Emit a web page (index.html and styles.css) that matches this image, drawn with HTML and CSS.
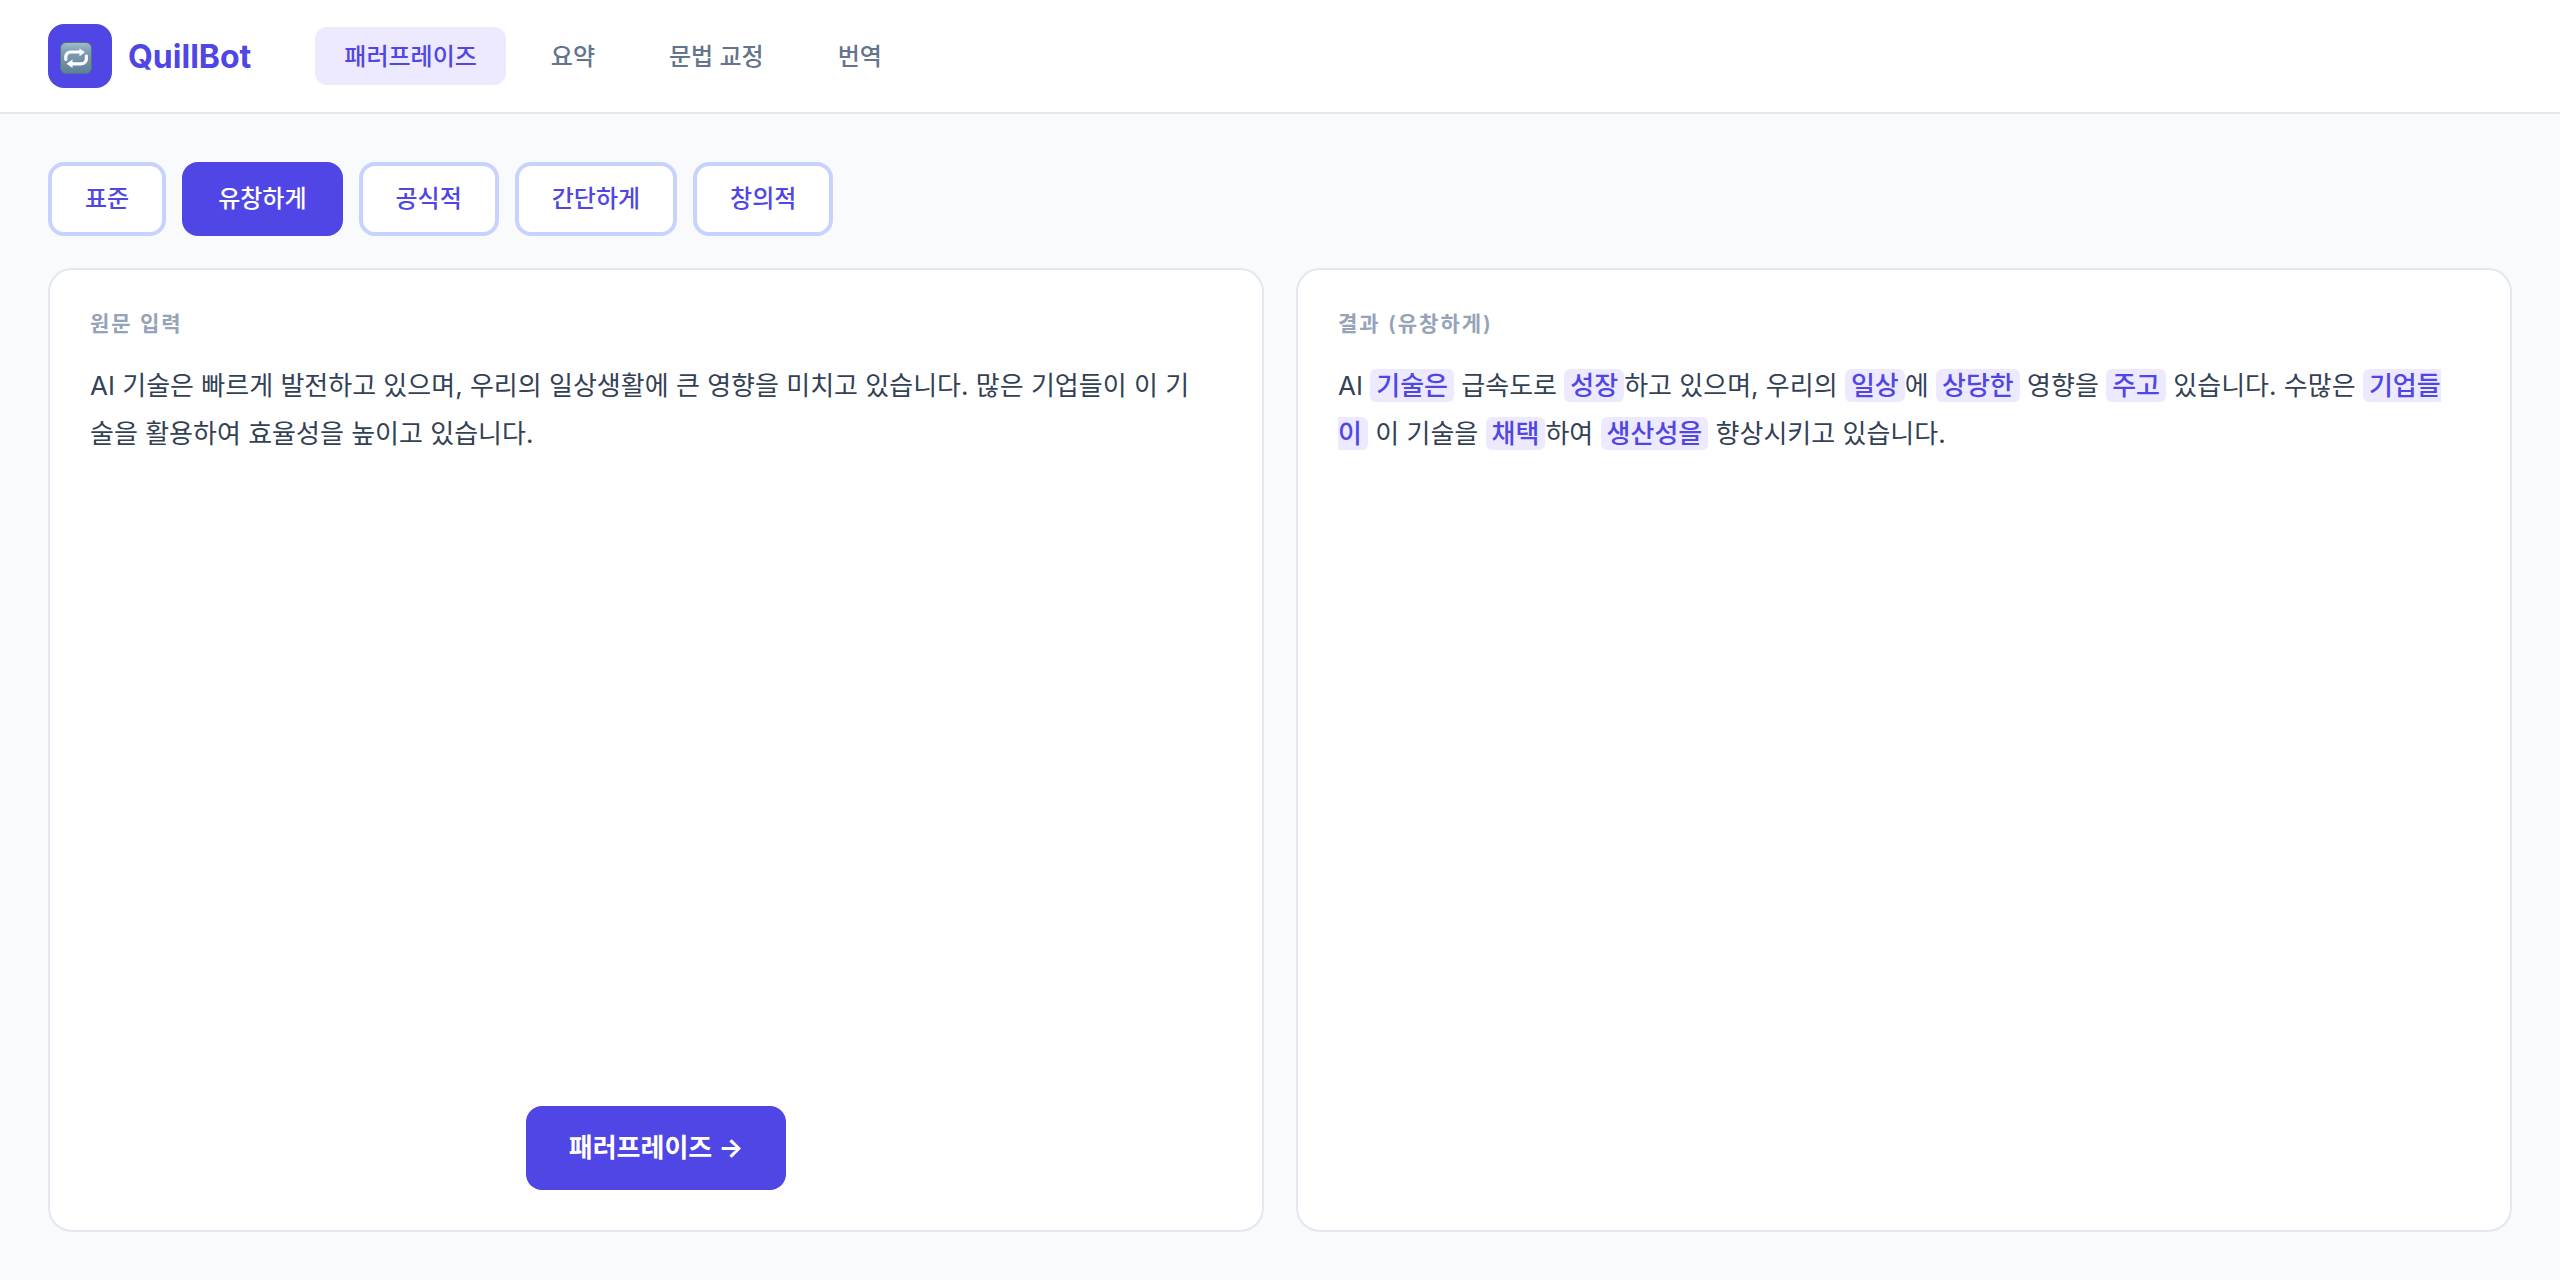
FILE: index.html
```html
<!DOCTYPE html>
<html lang="ko">
<head>
<meta charset="utf-8">
<meta name="viewport" content="width=device-width, initial-scale=1">
<title>QuillBot</title>
<link rel="stylesheet" href="styles.css">
</head>
<body>
<header class="header">
  <div class="brand">
    <span class="brand-mark">
      <svg class="brand-icon" viewBox="0 0 32 32" aria-hidden="true">
        <defs>
          <linearGradient id="tile" x1="0" y1="0" x2="0" y2="1">
            <stop offset="0" stop-color="#a3bccd"/>
            <stop offset="0.3" stop-color="#7d9db5"/>
            <stop offset="1" stop-color="#5f7f98"/>
          </linearGradient>
        </defs>
        <rect x="0.5" y="0.5" width="31" height="31" rx="5.5" fill="url(#tile)" stroke="#587187"/>
        <g fill="none" stroke="#fff" stroke-width="3.2" stroke-linecap="round">
          <path d="M5.8 17.4c-.6-5 1.400-7.400 5.700-7.400h9"/>
          <path d="M26.400 14.200c.6 5-1.400 7.600-5.700 7.600h-8.500"/>
        </g>
        <path d="M19.500 6.500l5.500 3.800-5.500 4zM12.500 17.500l-6 4.200 6 4.300z" fill="#fff"/>
      </svg>
    </span>
    <span class="brand-name">QuillBot</span>
  </div>
  <nav class="nav">
    <a class="nav-link is-active" href="#paraphrase" aria-current="page">패러프레이즈</a>
    <a class="nav-link" href="#summary">요약</a>
    <a class="nav-link" href="#grammar">문법 교정</a>
    <a class="nav-link" href="#translate">번역</a>
  </nav>
</header>
<main class="main">
  <div class="modes">
    <button class="mode" type="button">표준</button>
    <button class="mode is-active" type="button" aria-pressed="true">유창하게</button>
    <button class="mode" type="button">공식적</button>
    <button class="mode" type="button">간단하게</button>
    <button class="mode" type="button">창의적</button>
  </div>
  <div class="panels">
    <section class="panel">
      <label class="panel-title" for="source">원문 입력</label>
      <textarea class="panel-text source" id="source" spellcheck="false">AI 기술은 빠르게 발전하고 있으며, 우리의 일상생활에 큰 영향을 미치고 있습니다. 많은 기업들이 이 기술을 활용하여 효율성을 높이고 있습니다.</textarea>
      <button class="submit" type="button">패러프레이즈 →</button>
    </section>
    <section class="panel">
      <h2 class="panel-title">결과 (유창하게)</h2>
      <p class="panel-text">AI <mark class="change">기술은</mark> 급속도로 <mark class="change">성장</mark>하고 있으며, 우리의 <mark class="change">일상</mark>에 <mark class="change">상당한</mark> 영향을 <mark class="change">주고</mark> 있습니다. 수많은 <mark class="change">기업들이</mark> 이 기술을 <mark class="change">채택</mark>하여 <mark class="change">생산성을</mark> 향상시키고 있습니다.</p>
    </section>
  </div>
</main>
</body>
</html>
```
FILE: styles.css
```css
* {
  box-sizing: border-box;
}

body {
  margin: 0;
  min-height: 100vh;
  display: flex;
  flex-direction: column;
  background: #f8fafc;
  color: #334155;
  font-family: Inter, "Noto Sans CJK KR", sans-serif;
  font-size: 26px;
}

button,
textarea {
  font-family: inherit;
}

.header {
  display: flex;
  align-items: center;
  gap: 64px;
  padding: 24px 48px;
  background: #fff;
  border-bottom: 2px solid #e2e8f0;
}

.brand {
  display: flex;
  align-items: center;
  gap: 16px;
}

.brand-mark {
  display: flex;
  align-items: center;
  width: 64px;
  height: 64px;
  padding: 4px 0 0 12px;
  border-radius: 16px;
  background: #4f46e5;
}

.brand-icon {
  width: 32px;
  height: 32px;
}

.brand-name {
  color: #4f46e5;
  font-size: 32px;
  font-weight: 700;
}

.nav {
  display: flex;
  flex-wrap: wrap;
  gap: 16px;
}

.nav-link {
  padding: 13px 29px 11px;
  border-radius: 12px;
  color: #64748b;
  font-size: 24px;
  font-weight: 500;
  line-height: 34px;
  text-decoration: none;
}

.nav-link.is-active {
  background: #ede9fe;
  color: #4f46e5;
}

.main {
  flex: 1;
  display: flex;
  flex-direction: column;
  gap: 32px;
  padding: 48px;
}

.modes {
  display: flex;
  flex-wrap: wrap;
  gap: 16px;
}

.mode {
  padding: 16px 33px;
  border: 4px solid #c7d2fe;
  border-radius: 16px;
  background: #fff;
  color: #4f46e5;
  font-size: 24px;
  font-weight: 500;
  line-height: 34px;
}

.mode.is-active {
  padding: 16px 32px;
  border-color: #4f46e5;
  background: #4f46e5;
  color: #fff;
}

.panels {
  flex: 1;
  display: grid;
  grid-template-columns: 1fr 1fr;
  gap: 32px;
}

.panel {
  display: flex;
  flex-direction: column;
  gap: 24px;
  padding: 40px;
  border: 2px solid #e2e8f0;
  border-radius: 24px;
  background: #fff;
}

.panel-title {
  margin: 0;
  color: #94a3b8;
  font-size: 21px;
  font-weight: 600;
  line-height: 28px;
  letter-spacing: 2px;
}

.panel-text {
  margin: 0;
  padding: 0 16px 0 0;
  color: #334155;
  font-size: 26px;
  line-height: 48px;
}

.source {
  flex: 1;
  border: 0;
  outline: 0;
  resize: none;
  background: transparent;
}

.change {
  padding: 1px 6px;
  border-radius: 6px;
  background: #ede9fe;
  color: #4f46e5;
  font-weight: 500;
}

.submit {
  align-self: center;
  padding: 20px 43px;
  border: 0;
  border-radius: 16px;
  background: #4f46e5;
  color: #fff;
  font-size: 26px;
  font-weight: 700;
  line-height: 44px;
}
```
